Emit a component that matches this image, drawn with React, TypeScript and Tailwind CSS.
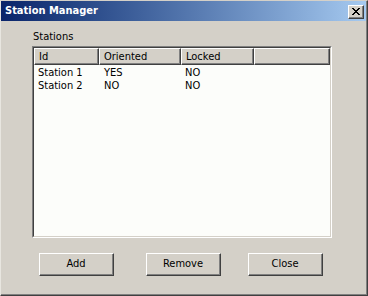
const ui = "font-['DejaVu_Sans_Condensed','Liberation_Sans',sans-serif]";

const columns = [
  { label: 'Id', width: 'w-[65px]' },
  { label: 'Oriented', width: 'w-[82px]' },
  { label: 'Locked', width: 'w-[73px]' },
  { label: '', width: 'w-[76px]' },
];

const stations = [
  { id: 'Station 1', oriented: 'YES', locked: 'NO' },
  { id: 'Station 2', oriented: 'NO', locked: 'NO' },
];

function CloseGlyph() {
  // classic 8x7 pixel cross
  const px: [number, number][] = [
    [0, 0], [1, 0], [6, 0], [7, 0],
    [1, 1], [2, 1], [5, 1], [6, 1],
    [2, 2], [3, 2], [4, 2], [5, 2],
    [3, 3], [4, 3],
    [2, 4], [3, 4], [4, 4], [5, 4],
    [1, 5], [2, 5], [5, 5], [6, 5],
    [0, 6], [1, 6], [6, 6], [7, 6],
  ];
  return (
    <svg width="8" height="7" viewBox="0 0 8 7" shapeRendering="crispEdges">
      {px.map(([x, y]) => (
        <rect key={`${x}-${y}`} x={x} y={y} width="1" height="1" fill="#000" />
      ))}
    </svg>
  );
}

function Button({ label, className }: { label: string; className?: string }) {
  return (
    <button
      className={`w-[75px] h-[23px] border-t border-l border-t-white border-l-white border-r border-b border-r-[#404040] border-b-[#404040] bg-[#d4d0c8] p-0 ${className ?? ''}`}
    >
      <span className="flex h-full w-full items-center justify-center border-r border-b border-r-[#808080] border-b-[#808080] pb-[2px] text-[11px] leading-[13px] text-black">
        {label}
      </span>
    </button>
  );
}

export default function App() {
  return (
    <div className={`w-[368px] h-[296px] bg-[#d4d0c8] border-t border-l border-t-[#d4d0c8] border-l-[#e8e6e0] border-r border-b border-r-[#404040] border-b-[#404040] ${ui}`}>
      <div className="flex h-full flex-col border-r border-b border-r-[#808080] border-b-[#808080]">
        {/* title bar */}
        <div className="flex h-[20px] shrink-0 items-start bg-linear-to-r from-[#0a246a] to-[#a6caf0]">
          <span className="mt-[3px] ml-[4px] flex-1 text-[11px] leading-[13px] font-bold text-white">Station Manager</span>
          <button className="mt-[4px] mr-[2px] h-[14px] w-[16px] border-t border-l border-t-white border-l-white border-r border-b border-r-[#404040] border-b-[#404040] bg-[#d4d0c8] p-0">
            <span className="flex h-full w-full items-start justify-start border-r border-b border-r-[#808080] border-b-[#808080] pt-[2px] pl-[3px]">
              <CloseGlyph />
            </span>
          </button>
        </div>

        {/* body */}
        <div className="flex flex-col pt-[9px] pl-[31px]">
          <span className="ml-[1px] text-[11px] leading-[13px] text-black">Stations</span>

          <div className="mt-[3px] h-[192px] w-[300px] border-t border-l border-t-[#808080] border-l-[#808080] border-r border-b border-r-white border-b-white">
            <div className="flex h-full w-full flex-col border-t border-l border-t-[#404040] border-l-[#404040] border-r border-b border-r-[#d4d0c8] border-b-[#d4d0c8] bg-[#fcfdfa]">
              <div className="flex h-[17px] shrink-0">
                {columns.map((c, i) => (
                  <div
                    key={i}
                    className={`${c.width} flex items-center border-t border-l border-t-white border-l-white border-r border-b border-r-[#404040] border-b-[#404040] bg-[#d4d0c8]`}
                  >
                    <span className="flex h-full w-full items-center border-r border-b border-r-[#808080] border-b-[#808080] pl-[4px] text-[11px] leading-[13px] text-black">
                      {c.label}
                    </span>
                  </div>
                ))}
              </div>

              <div className="flex flex-col pt-[1px]">
                {stations.map((s) => (
                  <div key={s.id} className="flex h-[13px] text-[11px] leading-[13px] text-black">
                    <span className="w-[65px] pl-[4px]">{s.id}</span>
                    <span className="w-[82px] pl-[5px]">{s.oriented}</span>
                    <span className="w-[73px] pl-[4px]">{s.locked}</span>
                  </div>
                ))}
              </div>
            </div>
          </div>

          <div className="mt-[15px] flex">
            <Button label="Add" className="ml-[7px]" />
            <Button label="Remove" className="ml-[32px]" />
            <Button label="Close" className="ml-[27px]" />
          </div>
        </div>
      </div>
    </div>
  );
}
